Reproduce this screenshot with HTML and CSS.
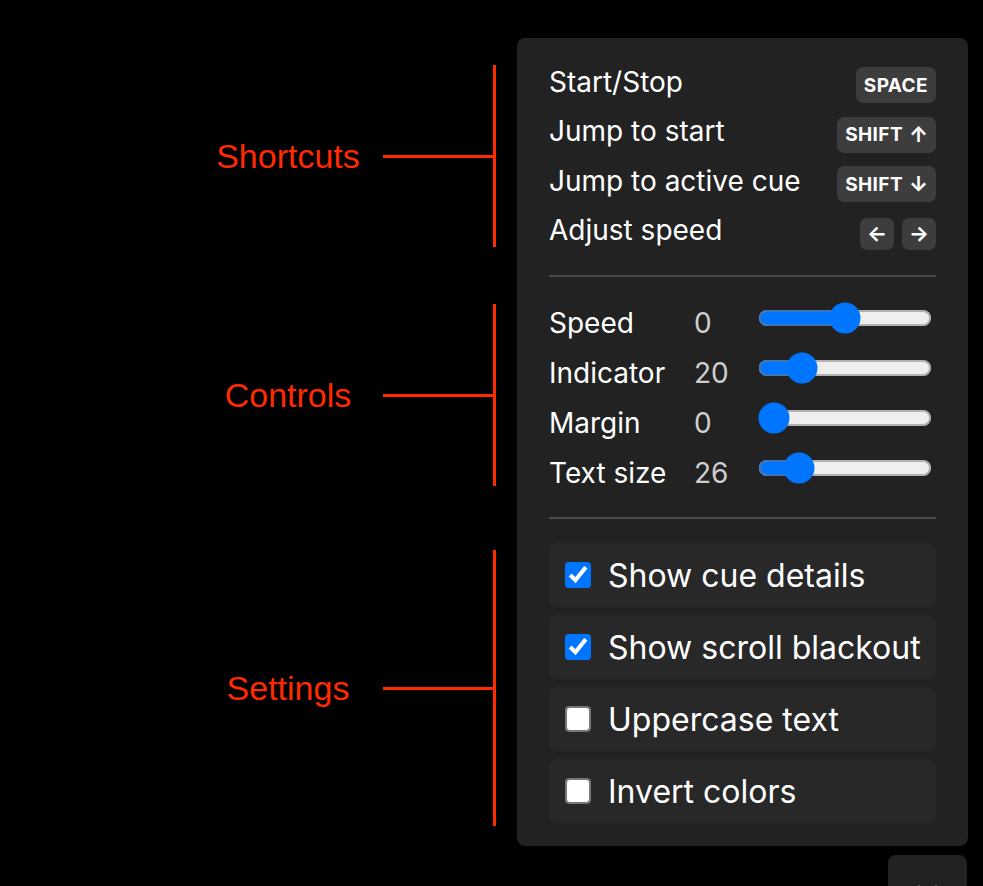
FILE: index.html
```html
<!DOCTYPE html>
<html lang="en">
<head>
<meta charset="utf-8">
<title>Teleprompter settings</title>
<link rel="stylesheet" href="styles.css">
</head>
<body>
<div class="stage">
  <div class="notes">
    <div class="note note-shortcuts"><span class="note-label">Shortcuts</span><span class="note-line"></span><span class="note-bar"></span></div>
    <div class="note note-controls"><span class="note-label">Controls</span><span class="note-line"></span><span class="note-bar"></span></div>
    <div class="note note-settings"><span class="note-label">Settings</span><span class="note-line"></span><span class="note-bar"></span></div>
  </div>
  <div class="side">
    <div class="panel">
      <section class="shortcuts">
        <div class="sc-row"><span class="sc-label">Start/Stop</span><span class="keys"><kbd class="key">SPACE</kbd></span></div>
        <div class="sc-row"><span class="sc-label">Jump to start</span><span class="keys"><kbd class="key">SHIFT<span class="arr">↑</span></kbd></span></div>
        <div class="sc-row"><span class="sc-label">Jump to active cue</span><span class="keys"><kbd class="key">SHIFT<span class="arr">↓</span></kbd></span></div>
        <div class="sc-row"><span class="sc-label">Adjust speed</span><span class="keys"><kbd class="key key-arrow">←</kbd><kbd class="key key-arrow">→</kbd></span></div>
      </section>
      <hr class="sep">
      <section class="controls">
        <div class="ctl-row"><span class="ctl-label">Speed</span><span class="ctl-value">0</span><input class="ctl-slider" type="range" min="-10" max="10" value="0"></div>
        <div class="ctl-row"><span class="ctl-label">Indicator</span><span class="ctl-value">20</span><input class="ctl-slider" type="range" min="0" max="100" value="20"></div>
        <div class="ctl-row"><span class="ctl-label">Margin</span><span class="ctl-value">0</span><input class="ctl-slider" type="range" min="0" max="40" value="0"></div>
        <div class="ctl-row"><span class="ctl-label">Text size</span><span class="ctl-value">26</span><input class="ctl-slider" type="range" min="10" max="100" value="26"></div>
      </section>
      <hr class="sep">
      <section class="settings">
        <label class="setting"><input class="check" type="checkbox" checked><span>Show cue details</span></label>
        <label class="setting"><input class="check" type="checkbox" checked><span>Show scroll blackout</span></label>
        <label class="setting"><input class="check" type="checkbox"><span>Uppercase text</span></label>
        <label class="setting"><input class="check" type="checkbox"><span>Invert colors</span></label>
      </section>
    </div>
    <button class="toggle" type="button" aria-label="Toggle settings">
      <svg class="chev" width="21" height="12" viewBox="0 0 21 12"><path d="M2 2 L10.5 10 L19 2" fill="none" stroke="#fff" stroke-width="3" stroke-linecap="round" stroke-linejoin="round"/></svg>
    </button>
  </div>
</div>
</body>
</html>
```
FILE: styles.css
```css
html, body {
  margin: 0;
  background: #000;
  height: 886px;
  overflow: hidden;
}
body {
  font-family: Inter, "Noto Sans", sans-serif;
  color: #fff;
}
.stage {
  display: flex;
  align-items: flex-start;
}

/* annotations */
.notes {
  width: 496px;
  margin-top: 65px;
  margin-right: 21px;
  display: flex;
  flex-direction: column;
}
.note {
  display: flex;
  align-items: center;
}
.note-label {
  width: 176px;
  margin-left: 200px;
  text-align: center;
  color: #ff2a00;
  font-family: "Liberation Sans", Arial, sans-serif;
  font-size: 34px;
}
.note-line {
  width: 110px;
  height: 3px;
  margin-left: 7px;
  background: #ff2a00;
}
.note-bar {
  width: 3px;
  align-self: stretch;
  background: #ff2a00;
}
.note-shortcuts { height: 182px; }
.note-controls { height: 182px; margin-top: 57px; }
.note-settings { height: 276px; margin-top: 64px; }

/* panel */
.side {
  width: 451px;
  margin-top: 38px;
  display: flex;
  flex-direction: column;
}
.panel {
  box-sizing: border-box;
  width: 451px;
  background: #222;
  border-radius: 8px;
  padding: 29px 32px 23px;
}
.sep {
  border: 0;
  height: 2px;
  margin: 0;
  background: #4a4a4a;
}

.shortcuts {
  display: flex;
  flex-direction: column;
  gap: 13.5px;
  margin-bottom: 23.5px;
}
.sc-row {
  display: flex;
  align-items: center;
  justify-content: space-between;
  height: 36px;
}
.sc-label {
  font-size: 28px;
  line-height: 34px;
  padding-bottom: 7px;
}
.keys {
  display: flex;
  gap: 8px;
}
.key {
  display: flex;
  align-items: center;
  box-sizing: border-box;
  height: 36px;
  padding: 0 8px;
  background: #3d3d3d;
  border-radius: 7px;
  font-family: Inter, sans-serif;
  font-weight: 700;
  font-size: 19px;
  letter-spacing: 0.4px;
  color: #fff;
}
.arr {
  margin-left: 6px;
  font-size: 21px;
  letter-spacing: 0;
}
.key-arrow {
  width: 34px;
  height: 32px;
  padding: 0;
  justify-content: center;
  font-size: 21px;
  letter-spacing: 0;
}

.controls {
  display: flex;
  flex-direction: column;
  gap: 14px;
  margin: 18px 0 36px;
}
.ctl-row {
  display: grid;
  grid-template-columns: 145px 60px 1fr;
  align-items: center;
  height: 36px;
}
.ctl-label, .ctl-value {
  font-size: 28px;
  line-height: 34px;
  padding-top: 11px;
}
.ctl-value { color: #cfcfcf; }
.ctl-slider {
  zoom: 2;
  width: 87px;
  margin: 0 2px;
}

.settings {
  display: flex;
  flex-direction: column;
  gap: 8px;
  margin-top: 24px;
}
.setting {
  display: flex;
  align-items: center;
  gap: 17px;
  height: 64px;
  padding-left: 16px;
  background: #282828;
  border-radius: 8px;
  font-size: 32px;
}
.check {
  zoom: 2;
  margin: 0;
}

.toggle {
  align-self: flex-end;
  margin: 9px 1px 0 0;
  width: 79px;
  height: 44px;
  padding: 27px 0 0;
  border: 0;
  border-radius: 8px;
  background: #222;
}
.chev {
  display: block;
  margin: 0 auto;
}
```
